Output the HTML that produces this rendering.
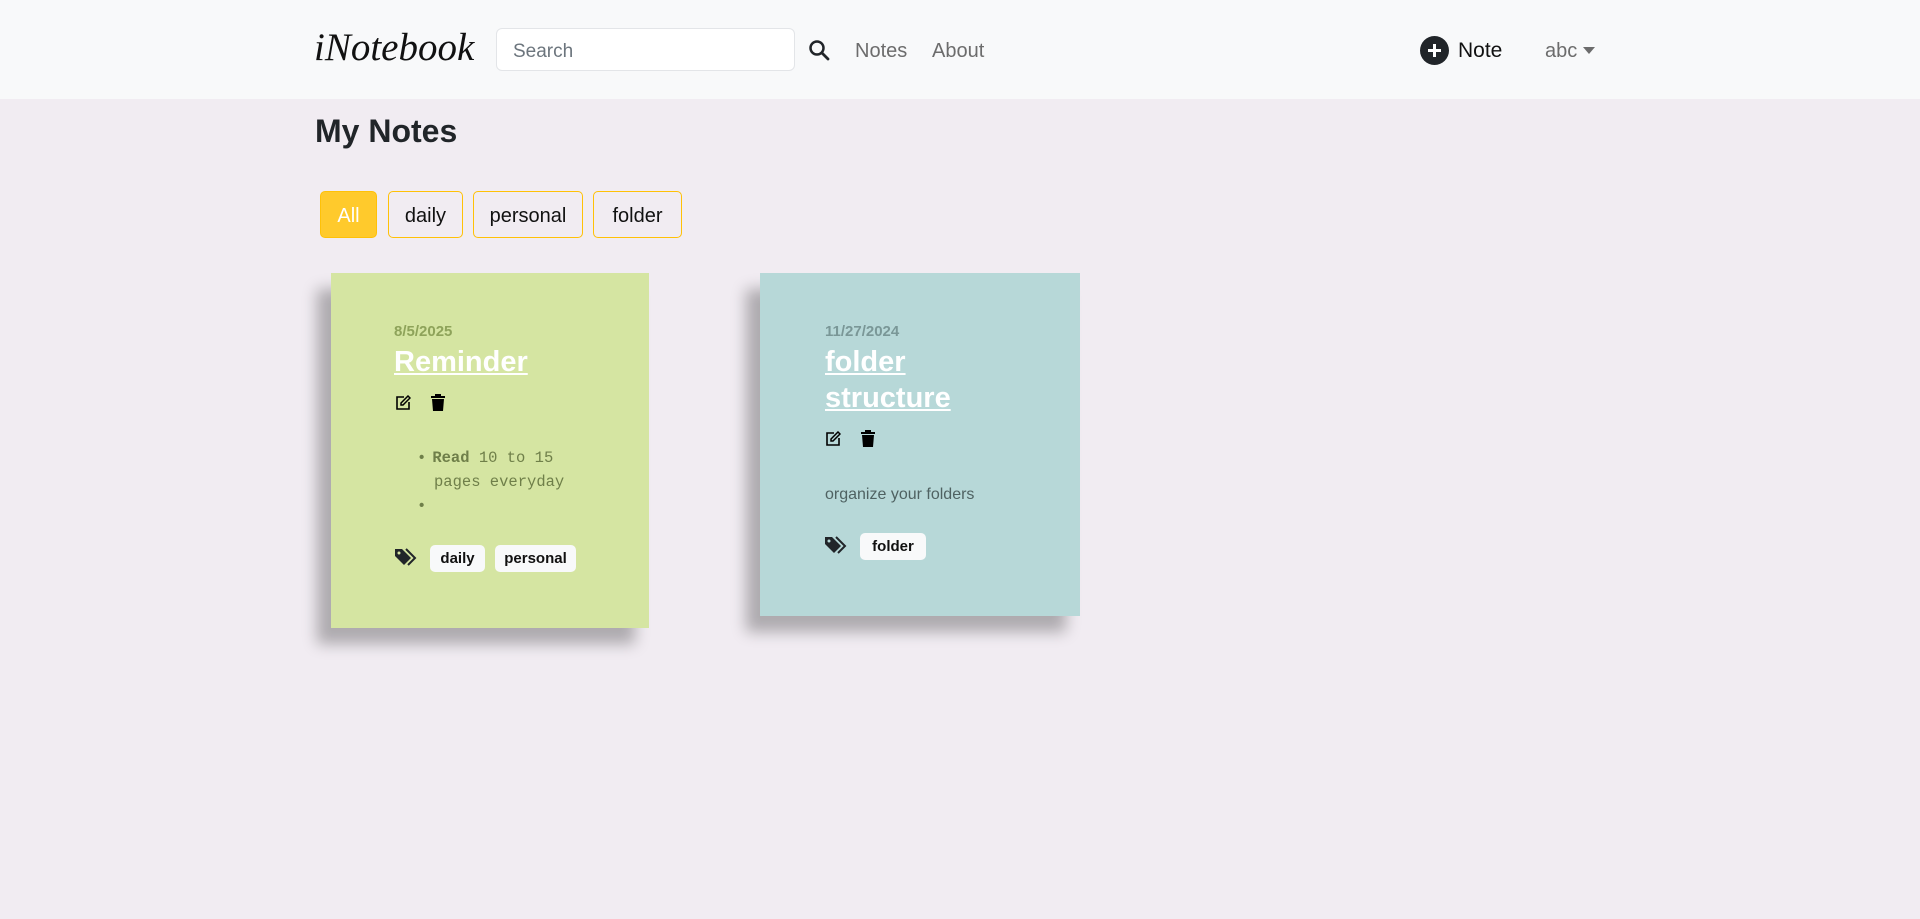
<!DOCTYPE html>
<html><head><meta charset="utf-8"><style>
*{box-sizing:border-box;margin:0;padding:0}
body{width:1920px;height:919px;background:#f1ecf2;font-family:"Liberation Sans",sans-serif;position:relative;overflow:hidden;color:#212529}
.nav{position:absolute;left:0;top:0;width:1920px;height:99px;background:#f8f9fa}
.abs{position:absolute;white-space:nowrap}
.logo{left:314px;top:25px;font-family:"Liberation Serif",serif;font-style:italic;font-size:39px;color:#111}
.search{left:496px;top:28px;width:299px;height:43px;background:#fff;border:1px solid #e3e5e8;border-radius:6px;font-size:19px;color:#6c757d;padding:12px 16px 8px}
.nl{font-size:20px;color:#6c6c6c;top:40px}
.card{position:absolute;box-shadow:-14px 16px 14px rgba(0,0,0,.28)}
.date{font-size:15px;font-weight:bold}
.title{font-size:29px;font-weight:bold;color:#fff;text-decoration:underline;line-height:36px}
.badge{position:absolute;background:#f8f9fa;border-radius:5px;font-size:15px;font-weight:bold;color:#111;height:27px;line-height:28px;text-align:center}
.btn{position:absolute;top:191px;height:47px;border:1px solid #ffc107;border-radius:5px;font-size:20px;line-height:48px;text-align:center;color:#111}
</style></head><body>
<div class="nav"></div>
<div class="abs logo">iNotebook</div>
<div class="abs search">Search</div>
<svg class="abs" style="left:808px;top:39px" width="22" height="22" viewBox="0 0 22 22"><circle cx="9" cy="9" r="6.5" fill="none" stroke="#212529" stroke-width="2.5"/><path d="M14 14l6 6" stroke="#212529" stroke-width="2.8" stroke-linecap="round"/></svg>
<div class="abs nl" style="left:855px">Notes</div>
<div class="abs nl" style="left:932px">About</div>
<svg class="abs" style="left:1420px;top:36px" width="29" height="29"><circle cx="14.5" cy="14.5" r="14.5" fill="#212529"/><path d="M14.5 8v13M8 14.5h13" stroke="#fff" stroke-width="3"/></svg>
<div class="abs" style="left:1458px;top:39px;font-size:21px;color:#111">Note</div>
<div class="abs nl" style="left:1545px">abc</div>
<svg class="abs" style="left:1583px;top:47px" width="12" height="8"><path d="M0 0h12L6 7z" fill="#6c6c6c"/></svg>

<div class="abs" style="left:315px;top:113px;font-size:32px;font-weight:bold">My Notes</div>
<div class="btn" style="left:320px;width:57px;background:#ffca2c;color:#fff">All</div>
<div class="btn" style="left:388px;width:75px">daily</div>
<div class="btn" style="left:473px;width:110px">personal</div>
<div class="btn" style="left:593px;width:89px">folder</div>

<div class="card" style="left:331px;top:273px;width:318px;height:355px;background:#d5e5a2"></div>
<div class="abs date" style="left:394px;top:323px;color:#8ea35a">8/5/2025</div>
<div class="abs title" style="left:394px;top:344px">Reminder</div>
<svg class="abs" style="left:395px;top:395px" width="16" height="16" viewBox="0 0 16 16"><path d="M9 2H2v12h12V7" fill="none" stroke="#000" stroke-width="1.6"/><path d="M13 1l2 2-7 7H6V8z" fill="none" stroke="#000" stroke-width="1.5"/></svg>
<svg class="abs" style="left:431px;top:394px" width="14" height="17" viewBox="0 0 14 17"><path d="M0 2h14v2H0zM4 0h6v2H4zM1 5h12l-1 12H2z" fill="#000"/></svg>
<div class="abs" style="left:417px;top:446px;font-family:'Liberation Mono',monospace;font-size:15.5px;color:#6f7f49;line-height:24px">
<div><span style="margin-right:6px">•</span><b>Read</b> 10 to 15</div>
<div style="padding-left:17px">pages everyday</div>
<div>•</div></div>
<svg class="abs" style="left:395px;top:548px" width="22" height="20" viewBox="0 0 22 20"><path d="M0 1v7l9 9 7-7-9-9z" fill="#212529"/><circle cx="4" cy="5" r="1.5" fill="#d5e5a2"/><path d="M11 1l9 9-7 7" fill="none" stroke="#212529" stroke-width="2"/></svg>
<div class="badge" style="left:430px;top:545px;width:55px">daily</div>
<div class="badge" style="left:495px;top:545px;width:81px">personal</div>

<div class="card" style="left:760px;top:273px;width:320px;height:343px;background:#b7d8d8"></div>
<div class="abs date" style="left:825px;top:323px;color:#7a9797">11/27/2024</div>
<div class="abs title" style="left:825px;top:344px">folder<br>structure</div>
<svg class="abs" style="left:825px;top:431px" width="16" height="16" viewBox="0 0 16 16"><path d="M9 2H2v12h12V7" fill="none" stroke="#000" stroke-width="1.6"/><path d="M13 1l2 2-7 7H6V8z" fill="none" stroke="#000" stroke-width="1.5"/></svg>
<svg class="abs" style="left:861px;top:430px" width="14" height="17" viewBox="0 0 14 17"><path d="M0 2h14v2H0zM4 0h6v2H4zM1 5h12l-1 12H2z" fill="#000"/></svg>
<div class="abs" style="left:825px;top:486px;font-size:16px;color:#4f6262">organize your folders</div>
<svg class="abs" style="left:825px;top:536px" width="22" height="20" viewBox="0 0 22 20"><path d="M0 1v7l9 9 7-7-9-9z" fill="#212529"/><circle cx="4" cy="5" r="1.5" fill="#b7d8d8"/><path d="M11 1l9 9-7 7" fill="none" stroke="#212529" stroke-width="2"/></svg>
<div class="badge" style="left:860px;top:533px;width:66px">folder</div>
</body></html>
